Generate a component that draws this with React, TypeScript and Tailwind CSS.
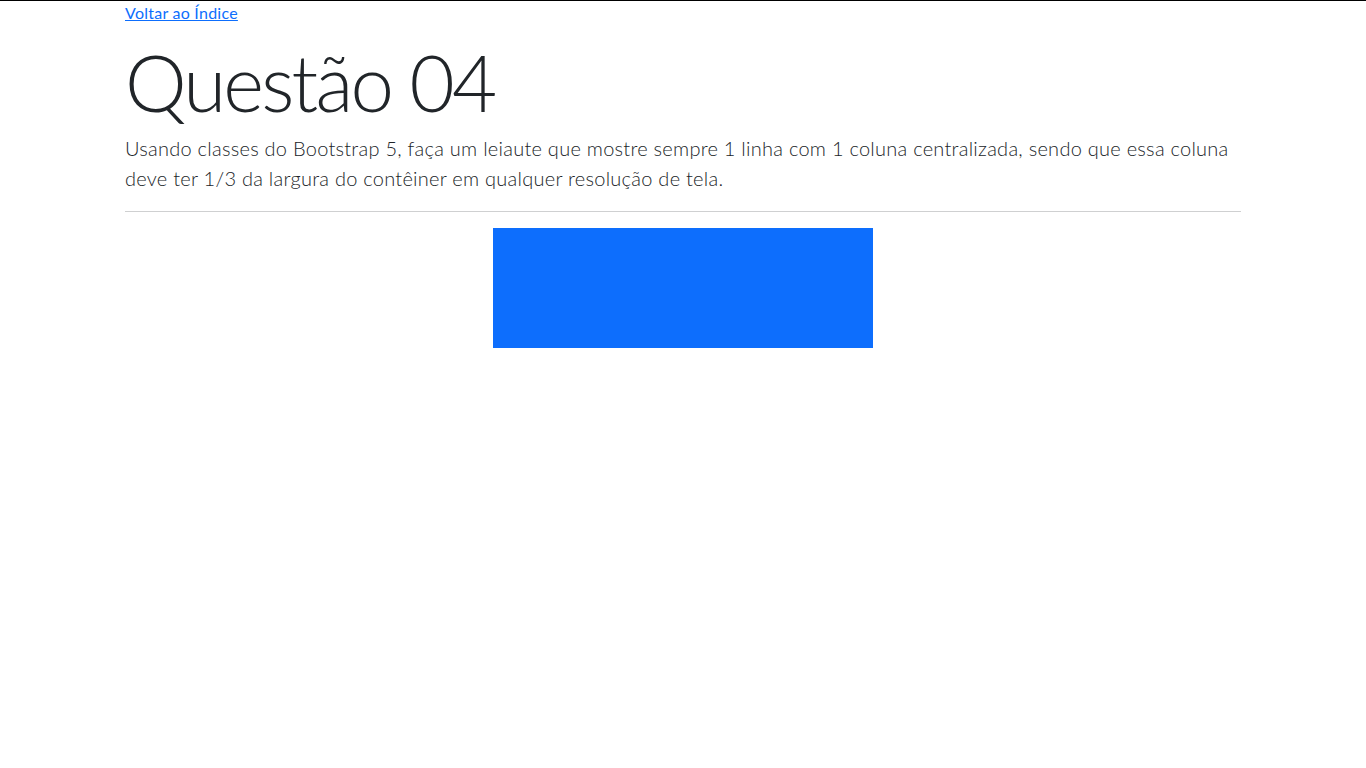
import React from 'react';

function App() {
  return (
    <div className="min-h-screen bg-white border-t border-black text-[#212529] font-['Lato','Liberation_Sans',sans-serif]">
      <div className="mx-auto w-[1140px] px-3">
        <a href="#" className="block text-base leading-6 tracking-[0.25px] text-[#0d6efd] underline w-fit">
          Voltar ao Índice
        </a>
        <h1 className="mt-[9px] mb-[5px] text-[78px] leading-[96px] font-light tracking-[-2.8px]">Questão 04</h1>
        <p className="-mt-[2px] text-xl leading-[30px] font-light tracking-[0.26px]">
          Usando classes do Bootstrap 5, faça um leiaute que mostre sempre 1 linha com 1 coluna centralizada, sendo que essa coluna deve ter 1/3 da largura do contêiner em qualquer resolução de tela.
        </p>
        <hr className="mt-[18px] mb-4 border-t border-[#cfd0d1]" />
        <div className="flex justify-center">
          <div className="w-[380px] h-[120px] bg-[#0d6efd]"></div>
        </div>
      </div>
    </div>
  );
}

export default App;
